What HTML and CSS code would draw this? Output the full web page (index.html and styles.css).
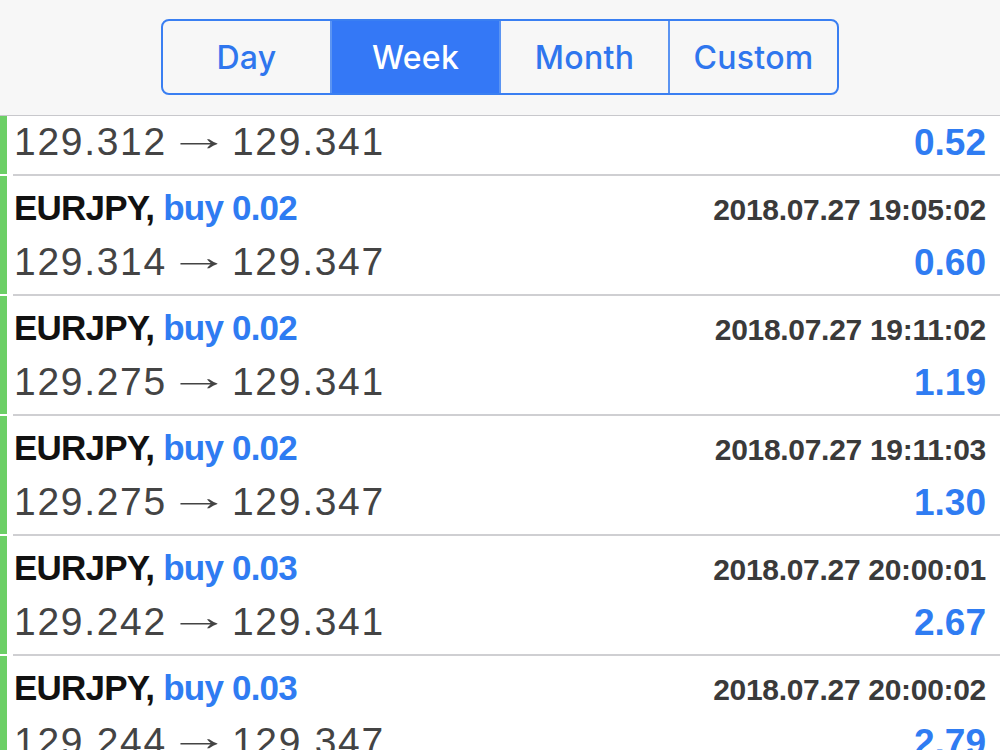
FILE: index.html
```html
<!DOCTYPE html>
<html>
<head>
    <meta charset="utf-8">
    <title>History</title>
    <link rel="stylesheet" href="styles.css">
</head>
<body>
<div class="top">
    <div class="seg">
        <div class="segitem">Day</div>
        <div class="segitem on">Week</div>
        <div class="segitem">Month</div>
        <div class="segitem">Custom</div>
    </div>
</div>
<div class="list">
    <div class="row first">
        <div class="bar"></div>
        <div class="body">
            <div class="line price"><span>129.312 <i>→</i> 129.341</span><span class="val">0.52</span></div>
        </div>
    </div>
    <div class="row">
        <div class="bar"></div>
        <div class="body">
            <div class="line title"><span>EURJPY, <b>buy 0.02</b></span><span class="date">2018.07.27 19:05:02</span></div>
            <div class="line price"><span>129.314 <i>→</i> 129.347</span><span class="val">0.60</span></div>
        </div>
    </div>
    <div class="row">
        <div class="bar"></div>
        <div class="body">
            <div class="line title"><span>EURJPY, <b>buy 0.02</b></span><span class="date">2018.07.27 19:11:02</span></div>
            <div class="line price"><span>129.275 <i>→</i> 129.341</span><span class="val">1.19</span></div>
        </div>
    </div>
    <div class="row">
        <div class="bar"></div>
        <div class="body">
            <div class="line title"><span>EURJPY, <b>buy 0.02</b></span><span class="date">2018.07.27 19:11:03</span></div>
            <div class="line price"><span>129.275 <i>→</i> 129.347</span><span class="val">1.30</span></div>
        </div>
    </div>
    <div class="row">
        <div class="bar"></div>
        <div class="body">
            <div class="line title"><span>EURJPY, <b>buy 0.03</b></span><span class="date">2018.07.27 20:00:01</span></div>
            <div class="line price"><span>129.242 <i>→</i> 129.341</span><span class="val">2.67</span></div>
        </div>
    </div>
    <div class="row">
        <div class="bar"></div>
        <div class="body">
            <div class="line title"><span>EURJPY, <b>buy 0.03</b></span><span class="date">2018.07.27 20:00:02</span></div>
            <div class="line price"><span>129.244 <i>→</i> 129.347</span><span class="val">2.79</span></div>
        </div>
    </div>
</div>
</body>
</html>
```

FILE: styles.css
```css
*{
    margin: 0px;
    padding: 0px;
    box-sizing: border-box;
}
body{
    background-color: #ffffff;
    font-family: "Liberation Sans", Arial, sans-serif;
    overflow: hidden;
    height: 750px;
}
.top{
    height: 116px;
    background-color: #f7f7f7;
    border-bottom: 1px solid #c8c8cc;
    padding-top: 19px;
    display: flex;
    justify-content: center;
}
.seg{
    width: 678px;
    height: 76px;
    border: 2px solid #3a7ff2;
    border-radius: 8px;
    display: flex;
    overflow: hidden;
}
.segitem{
    flex: 1;
    display: flex;
    align-items: center;
    justify-content: center;
    font-family: Inter, "Liberation Sans", sans-serif;
    font-size: 32px;
    font-weight: 500;
    letter-spacing: 0.3px;
    color: #2f76ee;
    border-left: 2px solid #5b94f2;
}
.segitem:first-child{
    border-left: none;
}
.segitem.on{
    background-color: #3478f6;
    color: #ffffff;
}
.row{
    display: flex;
    height: 120px;
}
.row.first{
    height: 60px;
}
.bar{
    width: 7px;
    background-color: #6ccf66;
    margin-bottom: 2px;
}
.body{
    flex: 1;
    margin-left: 6px;
    padding-top: 8px;
    padding-right: 14px;
    border-bottom: 2px solid #cfcfd2;
}
.row.first .body{
    padding-top: 0px;
}
.line{
    display: flex;
    justify-content: space-between;
    align-items: baseline;
    padding-left: 1px;
}
.title{
    height: 48px;
    line-height: 48px;
    font-size: 35px;
    font-weight: bold;
    color: #111111;
    letter-spacing: -0.8px;
}
.title b{
    color: #2f7cf2;
}
.date{
    font-size: 30px;
    color: #3a3a3a;
    letter-spacing: -0.3px;
}
.price{
    height: 62px;
    line-height: 60px;
    font-size: 39px;
    color: #444444;
    letter-spacing: 1.7px;
}
.price i{
    display: inline-block;
    width: 40px;
    text-align: center;
    font-style: normal;
    letter-spacing: 0px;
    transform: scaleX(1.6) translateY(-5px);
}
.row.first .price{
    height: 54px;
    line-height: 52px;
}
.val{
    font-size: 37px;
    font-weight: bold;
    color: #2f7cf2;
    letter-spacing: 0px;
}
```
